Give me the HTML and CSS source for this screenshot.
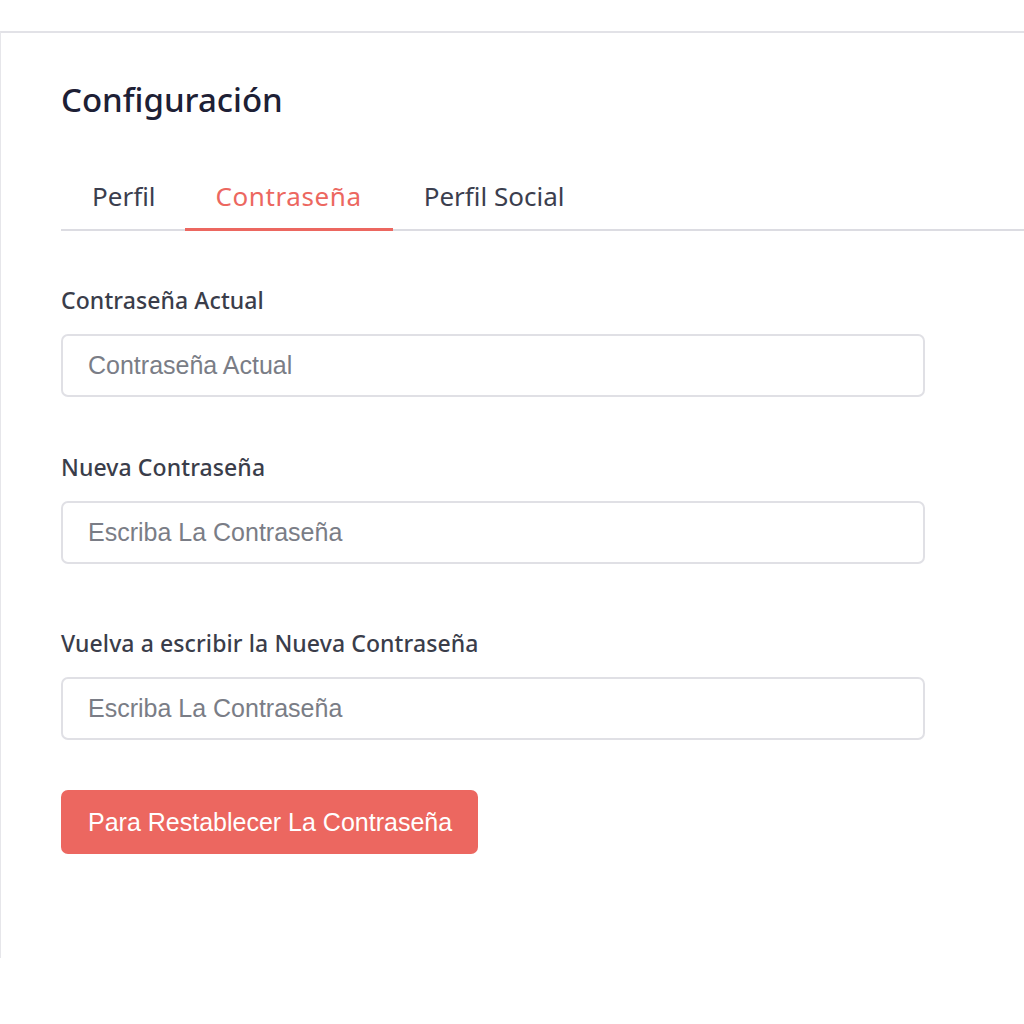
FILE: index.html
```html
<!DOCTYPE html>
<html lang="es">
<head>
<meta charset="utf-8">
<title>Configuración</title>
<link rel="stylesheet" href="styles.css">
</head>
<body>
<div class="card">
  <h1 class="title">Configuración</h1>
  <nav class="tabs">
    <a class="tab">Perfil</a>
    <a class="tab active">Contraseña</a>
    <a class="tab">Perfil Social</a>
  </nav>
  <form class="form">
    <div class="field">
      <label class="label">Contraseña Actual</label>
      <input class="input" type="password" placeholder="Contraseña Actual">
    </div>
    <div class="field">
      <label class="label">Nueva Contraseña</label>
      <input class="input" type="password" placeholder="Escriba La Contraseña">
    </div>
    <div class="field field-spaced">
      <label class="label">Vuelva a escribir la Nueva Contraseña</label>
      <input class="input" type="password" placeholder="Escriba La Contraseña">
    </div>
    <button class="btn" type="button">Para Restablecer La Contraseña</button>
  </form>
</div>
</body>
</html>
```
FILE: styles.css
```css
* { box-sizing: border-box; }
html, body { margin: 0; padding: 0; background: #fff; overflow: hidden; }
body { font-family: "Noto Sans", "Open Sans", sans-serif; }

.card {
  margin-top: 31px;
  height: 927px;
  border-top: 2px solid #e2e2e7;
  border-left: 1px solid #e6e6ea;
  padding: 47px 0 0 60px;
}

.title {
  margin: 0;
  font-size: 33px;
  line-height: 40px;
  font-weight: 500;
  color: #1d2035;
}

.tabs {
  display: flex;
  margin-top: 47px;
  border-bottom: 2px solid #dcdce2;
}

.tab {
  padding: 14px 31px 17px;
  font-size: 26px;
  line-height: 30px;
  color: #3b3e4e;
  border-bottom: 3px solid transparent;
  margin-bottom: -2px;
  text-align: center;
}
.tab:first-child { padding: 14px 29px 17px 31px; }
.tab.active {
  color: #ec6760;
  border-bottom-color: #ec6760;
  letter-spacing: 0.6px;
}

.form { padding-top: 54px; width: 864px; }

.field { display: flex; flex-direction: column; gap: 19px; }
.field + .field { margin-top: 55px; }
.field.field-spaced { margin-top: 64px; }

.label {
  font-size: 23px;
  line-height: 30px;
  font-weight: 500;
  letter-spacing: 0.1px;
  color: #3a3d4a;
}

.input {
  height: 63px;
  width: 100%;
  border: 2px solid #e0e0e5;
  border-radius: 7px;
  padding: 0 25px;
  font-family: "Liberation Sans", Arial, sans-serif;
  font-size: 25px;
  color: #333;
  outline: none;
  background: #fff;
}
.input::placeholder { color: #7a7d86; }

.btn {
  margin-top: 50px;
  height: 64px;
  padding: 0 26px 0 27px;
  border: none;
  border-radius: 7px;
  background: #ec6760;
  color: #fff;
  font-family: "Liberation Sans", Arial, sans-serif;
  font-size: 25px;
}
```
